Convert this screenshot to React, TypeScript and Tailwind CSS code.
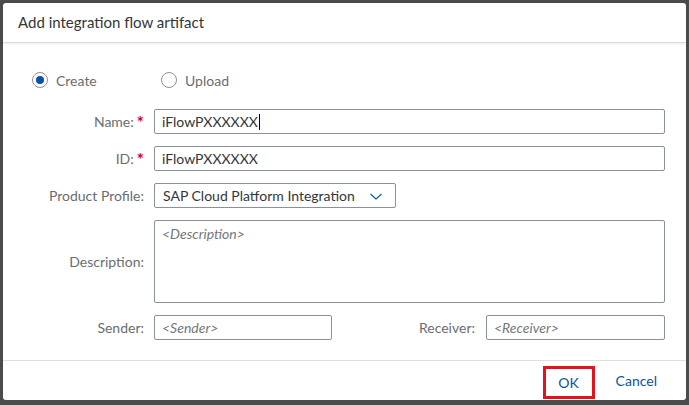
import React from "react";

const font = { fontFamily: 'Lato, "Noto Sans", Arial, sans-serif' };

function Label({ text, required }: { text: string; required?: boolean }) {
  return (
    <div className="flex items-center justify-end text-[14px] text-[#6a6d70] pr-[1px]">
      <span>{text}</span>
      {required && <span className="text-[#d0021b] ml-[3px] text-[17px] font-bold leading-none relative top-[1px]">*</span>}
    </div>
  );
}

export default function App() {
  return (
    <div className="w-[689px] h-[405px] bg-[#4b4b4b] p-[3px] pb-[5px]" style={font}>
      <div className="w-[683px] h-[397px] bg-white rounded-[3px] flex flex-col">
        <div className="h-[40px] flex items-center px-[15px] border-b border-[#dcdcdc] shadow-[0_1px_2px_rgba(0,0,0,0.08)]">
          <span className="text-[15px] text-[#32363a]">Add integration flow artifact</span>
        </div>
        <div className="flex-1 pl-0 pr-[21px]">
          <div className="flex items-center h-[22px] mt-[26px] pl-[29px]">
            <div className="flex items-center gap-[8px] w-[129px]">
              <div className="w-[16px] h-[16px] rounded-full border border-[#89919a] flex items-center justify-center">
                <div className="w-[8px] h-[8px] rounded-full bg-[#0854a0]" />
              </div>
              <span className="text-[14px] text-[#6a6d70]">Create</span>
            </div>
            <div className="flex items-center gap-[8px]">
              <div className="w-[16px] h-[16px] rounded-full border border-[#89919a]" />
              <span className="text-[14px] text-[#6a6d70]">Upload</span>
            </div>
          </div>
          <div className="grid grid-cols-[142px_1fr] gap-x-[9px] gap-y-[12px] mt-[18px]">
            <Label text="Name:" required />
            <div className="h-[25px] border border-[#89919a] rounded-[2px] flex items-center px-[7px] text-[14px] text-[#32363a]">
              iFlowPXXXXXX<span className="w-[1px] h-[16px] bg-black ml-[1px]" />
            </div>
            <Label text="ID:" required />
            <div className="h-[25px] border border-[#89919a] rounded-[2px] flex items-center px-[7px] text-[14px] text-[#32363a]">
              iFlowPXXXXXX
            </div>
            <Label text="Product Profile:" />
            <div>
              <div className="w-[242px] h-[25px] border border-[#89919a] rounded-[2px] flex items-center justify-between px-[8px] text-[14px] text-[#32363a]">
                <span>SAP Cloud Platform Integration</span>
                <svg width="14" height="10" viewBox="0 0 14 10" className="mr-[4px]">
                  <path d="M1.5 3 L7 8 L12.5 3" fill="none" stroke="#0854a0" strokeWidth="1.1" />
                </svg>
              </div>
            </div>
            <Label text="Description:" />
            <div className="h-[83px] border border-[#89919a] rounded-[2px] px-[7px] pt-[4px] text-[14px] italic text-[#74777a] leading-[18px]">
              &lt;Description&gt;
            </div>
            <Label text="Sender:" />
            <div className="flex items-center">
              <div className="w-[178px] h-[25px] border border-[#89919a] rounded-[2px] flex items-center px-[7px] text-[14px] italic text-[#74777a]">
                &lt;Sender&gt;
              </div>
              <div className="flex-1 text-right text-[14px] text-[#6a6d70] pr-[11px]">Receiver:</div>
              <div className="w-[179px] h-[25px] border border-[#89919a] rounded-[2px] flex items-center px-[7px] text-[14px] italic text-[#74777a]">
                &lt;Receiver&gt;
              </div>
            </div>
          </div>
        </div>
        <div className="h-[40px] border-t border-[#e0e0e0] flex items-center justify-end pr-[29px]">
          <div className="w-[52px] h-[33px] border-[3px] border-[#e3131e] flex items-center justify-center text-[14px] text-[#0854a0] mt-[3px]">
            OK
          </div>
          <div className="ml-[21px] text-[14px] text-[#0854a0]">Cancel</div>
        </div>
      </div>
    </div>
  );
}
